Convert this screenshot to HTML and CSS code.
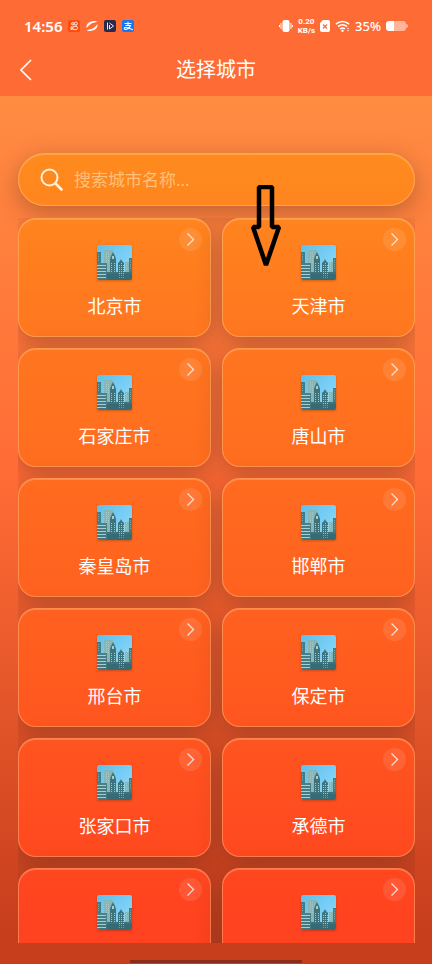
FILE: index.html
```html
<!DOCTYPE html>
<html lang="zh-CN">
<head>
<meta charset="utf-8">
<meta name="viewport" content="width=device-width, initial-scale=1">
<title>选择城市</title>
<link rel="stylesheet" href="styles.css">
</head>
<body>
<svg class="defs" aria-hidden="true">
  <defs>
    <linearGradient id="sky" x1="0" y1="0" x2="1" y2="1">
      <stop offset="0" stop-color="#5fc0ea"/>
      <stop offset="0.5" stop-color="#77cdf5"/>
      <stop offset="1" stop-color="#9be0ee"/>
    </linearGradient>
    <linearGradient id="haze" x1="0" y1="0" x2="0" y2="1">
      <stop offset="0" stop-color="#4a8189"/>
      <stop offset="1" stop-color="#3f7480"/>
    </linearGradient>
    <clipPath id="tile"><rect width="35" height="35" rx="2"/></clipPath>
    <symbol id="city" viewBox="0 0 35 35">
      <g clip-path="url(#tile)">
        <rect width="35" height="35" fill="url(#sky)"/>
        <path fill="#88b5b5" d="M7 5h9v30H7zM28 17h4v18h-4z"/>
        <path stroke="#a3c9c8" stroke-width="1" stroke-dasharray="1 1" d="M9.500 7v12M11.500 7v12M29.500 18v8"/>
        <path fill="#457b83" d="M0 7h4v12H0zM32 13h3v22h-3z"/>
        <path stroke="#72a7aa" stroke-width="1" stroke-dasharray="1 1" d="M1.500 9v8M33.500 15v10"/>
        <path fill="url(#haze)" d="M0 18h10v17H0z"/>
        <path fill="#3f737b" d="M10 27h3V14l1-3 1-2 1-2 1 2 1 2 1 3v13h2V18l2-2 1-2 1 2 2 2v9h8v8H10z"/>
        <path fill="#a5ced0" d="M0 20h9v1H0zM0 23h9v1H0zM0 26h9v1H0zM0 29h9v1H0zM0 32h9v1H0zM15 11h2v3h-2z"/>
        <path stroke="#9cc8ca" stroke-width="1" stroke-dasharray="1 1" d="M14.500 18v9M17.500 18v9M22.500 20v14M24.500 18v16M26.500 20v14"/>
        <path fill="#2b606d" fill-opacity=".4" d="M10 29h25v6H10z"/>
      </g>
    </symbol>
    <symbol id="chevron" viewBox="0 0 23 23">
      <path d="M8.500 5.500l6 6-6 6" fill="none" stroke="#fff" stroke-opacity=".75" stroke-width="1.300"/>
    </symbol>
  </defs>
</svg>
<div class="app">
  <header class="top">
    <div class="status">
      <div class="status-group">
        <span class="clock">14:56</span>
        <svg class="app-icon" viewBox="0 0 12 12"><rect width="12" height="12" rx="2" fill="#ff4b0b"/><g fill="none" stroke="#fff" stroke-width=".9"><circle cx="4.800" cy="3.800" r="1.200"/><circle cx="7.800" cy="3.600" r="1.500"/><rect x="5" y="6.300" width="4.300" height="3.300" rx="1"/><path d="M5 7.500L3 6.700v2.800l2-.8"/></g></svg>
        <svg class="app-icon" viewBox="0 0 12 12"><path fill="#fff" d="M.5 8C0 3 4 .5 11.500 1L9 2.500C5.500 2.500 3 5 .5 8zM11.500 4c.5 5-3.500 7.500-11 7L3 9.500c3.500 0 6-2.500 8.500-5.500z"/></svg>
        <svg class="app-icon" viewBox="0 0 12 12"><rect width="12" height="12" rx="2" fill="#29294d"/><path d="M5.500 3l4 3-4 3V5M3.500 2.500v7" fill="none" stroke="#fff" stroke-width=".9"/></svg>
        <svg class="app-icon" viewBox="0 0 12 12"><rect width="12" height="12" rx="2" fill="#1777ef"/><path d="M2.500 3.500h7M6 1.800v3.700M3.500 5.500h5C7.500 9 3 10.500 2.300 8.800c0-2.500 4.700-.8 8.700.9" fill="none" stroke="#fff" stroke-width="1.100"/></svg>
      </div>
      <div class="status-group status-right">
        <svg class="vibrate" viewBox="0 0 14 12"><rect x="3.500" width="7" height="12" rx="2" fill="#fff"/><path d="M2 3v6M12 3v6M.5 5v2M13.500 5v2" stroke="#fff" stroke-width="1"/></svg>
        <span class="speed"><span>0.20</span><span>KB/s</span></span>
        <svg class="sim" viewBox="0 0 10 12"><path d="M3 0h5q2 0 2 2v8q0 2-2 2H2q-2 0-2-2V3z" fill="#fff"/><path d="M3 4.500l4 4m0-4l-4 4" stroke="#ff6b35" stroke-width="1.300"/></svg>
        <svg class="wifi" viewBox="0 0 15 12"><path d="M1 4q6.500-5 13 0M3 6.500q4.500-3.500 9 0M5 9q2.500-2 5 0" fill="none" stroke="#fff" stroke-width="1.600"/><circle cx="7.500" cy="10.700" r="1.200" fill="#fff"/><path d="M12 9l1-1.500L14 9zM12 10l1 1.500 1-1.500z" fill="#fff"/></svg>
        <span class="percent">35%</span>
        <svg class="battery" viewBox="0 0 22 12"><path d="M8 1h9q3 0 3 3v4q0 3-3 3H8z" fill="#fff" fill-opacity=".5"/><path d="M3 1h5v10H3q-3 0-3-3V4q0-3 3-3z" fill="#fff"/><path d="M20 4q2 0 2 2t-2 2z" fill="#fff" fill-opacity=".5"/></svg>
      </div>
    </div>
    <div class="nav">
      <button class="back" type="button" aria-label="返回"><svg viewBox="0 0 12 22"><path d="M11 1L1 11l10 10" fill="none" stroke="#fff" stroke-width="1.600"/></svg></button>
      <h1>选择城市</h1>
    </div>
  </header>
  <main class="content">
    <label class="search glass">
      <svg viewBox="0 0 23 23"><circle cx="9.500" cy="9.500" r="8" fill="none" stroke="#fff0d8" stroke-width="2"/><path d="M15.500 15.500l6 6" stroke="#fff0d8" stroke-width="2.600" stroke-linecap="round"/></svg>
      <input type="text" placeholder="搜索城市名称..." aria-label="搜索城市名称">
    </label>
    <div class="cities">
      <button class="city glass" type="button"><svg class="go"><use href="#chevron"/></svg><svg class="pic"><use href="#city"/></svg><span>北京市</span></button>
      <button class="city glass" type="button"><svg class="go"><use href="#chevron"/></svg><svg class="pic"><use href="#city"/></svg><span>天津市</span></button>
      <button class="city glass" type="button"><svg class="go"><use href="#chevron"/></svg><svg class="pic"><use href="#city"/></svg><span>石家庄市</span></button>
      <button class="city glass" type="button"><svg class="go"><use href="#chevron"/></svg><svg class="pic"><use href="#city"/></svg><span>唐山市</span></button>
      <button class="city glass" type="button"><svg class="go"><use href="#chevron"/></svg><svg class="pic"><use href="#city"/></svg><span>秦皇岛市</span></button>
      <button class="city glass" type="button"><svg class="go"><use href="#chevron"/></svg><svg class="pic"><use href="#city"/></svg><span>邯郸市</span></button>
      <button class="city glass" type="button"><svg class="go"><use href="#chevron"/></svg><svg class="pic"><use href="#city"/></svg><span>邢台市</span></button>
      <button class="city glass" type="button"><svg class="go"><use href="#chevron"/></svg><svg class="pic"><use href="#city"/></svg><span>保定市</span></button>
      <button class="city glass" type="button"><svg class="go"><use href="#chevron"/></svg><svg class="pic"><use href="#city"/></svg><span>张家口市</span></button>
      <button class="city glass" type="button"><svg class="go"><use href="#chevron"/></svg><svg class="pic"><use href="#city"/></svg><span>承德市</span></button>
      <button class="city glass" type="button" aria-label="更多城市"><svg class="go"><use href="#chevron"/></svg><svg class="pic"><use href="#city"/></svg></button>
      <button class="city glass" type="button" aria-label="更多城市"><svg class="go"><use href="#chevron"/></svg><svg class="pic"><use href="#city"/></svg></button>
    </div>
    <svg class="pointer" viewBox="0 0 32 84" aria-hidden="true"><path d="M9 2h13v40h7L16 80 3 42h6z" fill="none" stroke="#000" stroke-width="4.500" stroke-linejoin="bevel"/></svg>
  </main>
  <div class="home-bar"></div>
</div>
</body>
</html>
```
FILE: styles.css
```css
* { box-sizing: border-box; }

body {
  margin: 0;
  color: #fff;
  font-family: "Noto Sans", "Noto Sans CJK SC", sans-serif;
}

button, input {
  font: inherit;
  color: inherit;
  border: 0;
  padding: 0;
  background: none;
}

svg { display: block; flex: none; }

.defs { position: absolute; width: 0; height: 0; }

.app {
  position: relative;
  display: flex;
  flex-direction: column;
  height: 100vh;
  overflow: hidden;
  background: linear-gradient(180deg, #ff8c42 10%, #ff6b35 50%, #c73e1d 97%);
}

.top {
  flex: none;
  height: 96px;
  background: #ff6b35;
}

.status {
  display: flex;
  justify-content: space-between;
  align-items: center;
  height: 44px;
  padding: 8px 24px 0;
}

.status-group { display: flex; align-items: center; gap: 6px; }
.status-right { gap: 5px; }

.clock { font-size: 15px; font-weight: 600; line-height: 20px; }
.percent { font-size: 13px; font-weight: 500; line-height: 20px; }

.speed {
  display: flex;
  flex-direction: column;
  align-items: center;
  font-family: Roboto, sans-serif;
  font-size: 8px;
  font-weight: 700;
  line-height: 9px;
}

.app-icon { width: 12px; height: 12px; }
.vibrate { width: 14px; height: 12px; }
.sim { width: 10px; height: 12px; }
.wifi { width: 15px; height: 12px; }
.battery { width: 22px; height: 12px; }

.nav {
  display: grid;
  grid-template-columns: 48px 1fr 48px;
  align-items: center;
  height: 52px;
}

.back { height: 44px; padding-left: 20px; }
.back svg { width: 12px; height: 22px; }

h1 {
  margin: 0;
  font-size: 20px;
  font-weight: 400;
  line-height: 28px;
  text-align: center;
}

.content {
  position: relative;
  display: flex;
  flex-direction: column;
  flex: 1;
  min-height: 0;
  padding: 57px 17px 21px 18px;
}

.glass {
  border: 1px solid rgba(255, 210, 150, .4);
  background: linear-gradient(180deg, #ff8c1e 15%, #ff7a1f 31%, #ff5d1f 68%, #ff421f 96%) fixed;
  box-shadow: 0 7px 24px rgba(80, 40, 30, .36), inset 0 1px 0 rgba(255, 220, 170, .3);
}

.search {
  display: flex;
  align-items: center;
  flex: none;
  gap: 11px;
  height: 53px;
  padding: 0 21px;
  border-radius: 27px;
}

.search svg { width: 23px; height: 23px; }

.search input {
  flex: 1;
  min-width: 0;
  height: 40px;
  font-size: 17px;
  outline: 0;
}

.search input::placeholder { color: #ffc078; opacity: 1; }

.cities {
  display: grid;
  grid-template-columns: 1fr 1fr;
  grid-auto-rows: 119px;
  gap: 11px;
  flex: 1;
  min-height: 0;
  margin-top: 12px;
  overflow: hidden;
}

.city {
  position: relative;
  display: flex;
  flex-direction: column;
  align-items: center;
  gap: 13px;
  padding-top: 26px;
  border-radius: 18px;
  font-size: 18px;
  line-height: 26px;
}

.pic {
  width: 35px;
  height: 35px;
  filter: drop-shadow(0 1px 1px rgba(70, 40, 20, .3));
}

.go {
  position: absolute;
  top: 9px;
  right: 8px;
  width: 23px;
  height: 23px;
  border-radius: 50%;
  background: rgba(255, 255, 255, .1);
}

.pointer {
  position: absolute;
  top: 89px;
  left: 250px;
  width: 32px;
  height: 84px;
}

.home-bar {
  position: absolute;
  bottom: 1px;
  left: 30%;
  width: 40%;
  height: 3px;
  background: #8a2d18;
}
```
